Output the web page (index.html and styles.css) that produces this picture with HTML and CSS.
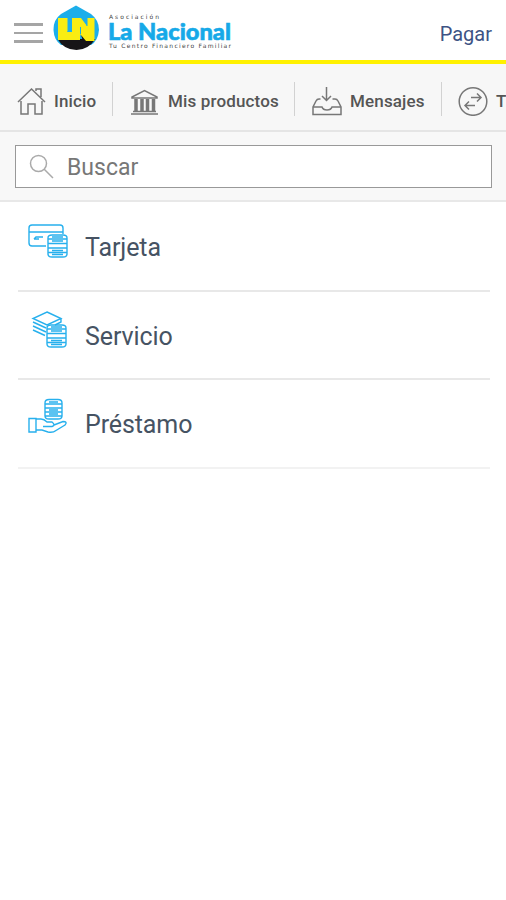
FILE: index.html
```html
<!DOCTYPE html>
<html lang="es">
<head>
<meta charset="utf-8">
<title>Pagar</title>
<link rel="stylesheet" href="styles.css">
</head>
<body>
<header class="header">
  <button class="burger" aria-label="Menú"><span></span><span></span><span></span></button>
  <svg class="logo" width="184" height="54" viewBox="50 0 184 54">
    <path fill="#1caeea" d="M76 5.500L91 14Q99 20 99 30Q98 41 91 45H61Q54 40 53.500 30Q53 20 61 14Z"/>
    <path fill="#171417" d="M57.500 39H95.500Q88 50 76.500 50Q64 50 57.500 39Z"/>
    <path fill="#f9ed12" d="M58 18H67.500V32H72V18H81L87 26V18H94.500V41H85L80 34V40H58Z"/>
    <path fill="#171417" d="M81 35L86 41H83Z"/>
    <path stroke="#1caeea" stroke-width="1" d="M67.500 31.500H72M80.500 27V34M87 18V26"/>
    <text class="logo-small" x="109" y="19" textLength="50">Asociación</text>
    <text class="logo-name" x="108" y="40" textLength="123" lengthAdjust="spacingAndGlyphs">La Nacional</text>
    <text class="logo-small" x="109" y="47.500" textLength="122">Tu Centro Financiero Familiar</text>
  </svg>
  <span class="page-title">Pagar</span>
</header>
<nav class="nav">
  <a class="tab tab-home">
    <svg width="30" height="30" viewBox="0 0 30 30"><path d="M1 16L14.500 3L28 16M4 15V28H11V18H18V28H25V15M19 5V3H24V11"/></svg>
    <span>Inicio</span>
  </a>
  <a class="tab tab-products">
    <svg width="30" height="30" viewBox="0 0 30 30"><path d="M2 12V11L14.500 4.500L27 11V12ZM3 25.500H26M1 28H28"/><path class="columns" d="M6 13V25M12 13V25M17.500 13V25M23.500 13V25"/></svg>
    <span>Mis productos</span>
  </a>
  <a class="tab tab-messages">
    <svg width="30" height="30" viewBox="0 0 30 30"><path d="M14.500 1V14M10 10L14.500 14.500L19 10M8.500 13H7Q5 13 4 15L1 21V28.500H29V21L26 15Q25 13 23 13H20.500M1 21H10Q11 24 15 24Q19 24 20 21H29"/></svg>
    <span>Mensajes</span>
  </a>
  <a class="tab tab-transfers">
    <svg width="30" height="30" viewBox="0 0 30 30"><circle cx="15" cy="15.500" r="13.800"/><path d="M13 11.500H23M19 7.500L23 11.500L19 15.500M17 19.500H7M11 15.500L7 19.500L11 23.500"/></svg>
    <span>Transferencias</span>
  </a>
</nav>
<div class="search-bar">
  <label class="search-field">
    <svg width="26" height="26" viewBox="0 0 26 26"><circle cx="9.500" cy="9.500" r="8"/><path d="M15 15L24 24"/></svg>
    <span>Buscar</span>
  </label>
</div>
<main class="list">
  <a class="row row-card">
    <svg width="42" height="40" viewBox="0 0 42 40"><path d="M19 26H5Q2 26 2 23V8Q2 5 5 5H33Q36 5 36 8V14M2 12H36M7 19L9 17H16M7 19H12"/><path d="M21 18Q21 15 25 15H36Q40 15 40 18V34Q40 37 36 37H25Q21 37 21 34ZM21 19H40M21 23.500H40M21 28H40M21 32.500H40M25 17H36M25 21H36M25 30.500H36M25 34.500H36"/></svg>
    <span>Tarjeta</span>
  </a>
  <a class="row row-service">
    <svg width="42" height="40" viewBox="0 0 42 40"><path d="M20 2L34 8.500L20 15L6 8.500ZM6 12L19 18M6 16L19 22M6 20L18 25.500M34 8.500V12L28 15"/><path d="M20 18Q20 15 24 15H35Q39 15 39 18V34Q39 37 35 37H24Q20 37 20 34ZM20 19H39M20 23.500H39M20 28H39M20 32.500H39M24 17H35M24 21H35M24 30.500H35M24 34.500H35"/></svg>
    <span>Servicio</span>
  </a>
  <a class="row row-loan">
    <svg width="42" height="40" viewBox="0 0 42 40"><path d="M18 5Q18 1.500 22 1.500H31Q35 1.500 35 5V18Q35 21 31 21H22Q18 21 18 18ZM18 6H35M18 10H35M18 14H35M18 18H35M22 4H31M22 12H31M22 16H31"/><path d="M2 20.500H9V34H2ZM9 21H14Q17 21 20 24H25Q29 27 25 28.500H16M27 27L36 23.500Q41 23.500 38 27L29 32.500Q26 35 21 34L15 32H9"/></svg>
    <span>Préstamo</span>
  </a>
</main>
</body>
</html>
```
FILE: styles.css
```css
* { box-sizing: border-box; }
body { margin: 0; background: #fff; font-family: Roboto, "Noto Sans", sans-serif; overflow: hidden; }
svg { display: block; flex: none; fill: none; }
.header { display: flex; height: 64px; border-bottom: 4px solid #fff100; padding-left: 14px; }
.burger { display: flex; flex-direction: column; gap: 6px; width: 29px; margin: 23px 7px 0 0; padding: 0; border: 0; background: none; }
.burger span { width: 29px; height: 2.500px; background: #a5a5a5; }
.logo-small { font: 400 6px "DejaVu Sans", sans-serif; fill: #444; }
.logo-name { font: 900 23px Lato, sans-serif; fill: #16a9e8; stroke: #16a9e8; stroke-width: .6px; }
.page-title { margin: 22px 14px 0 auto; color: #3d5384; font-size: 20px; line-height: 24px; letter-spacing: 0; }
.nav { display: flex; height: 68px; background: #f7f7f7; border-bottom: 2px solid #e5e5e5; padding-top: 18px; overflow: hidden; }
.tab { display: flex; flex: none; height: 34px; color: #555; font-size: 17px; font-weight: 500; line-height: 38px; letter-spacing: .15px; border-right: 1.500px solid #d2d2d2; }
.tab svg { margin-top: 4px; stroke: #777; stroke-width: 1.500px; }
.tab span { margin-left: 7px; white-space: nowrap; }
.tab .columns { stroke-width: 3.500px; }
.tab-home { width: 113px; padding-left: 17px; }
.tab-products { width: 182px; padding-left: 17px; }
.tab-products span { margin-left: 8px; }
.tab-messages { width: 147px; padding-left: 17px; }
.tab-messages span { margin-left: 8px; }
.tab-transfers { padding-left: 16px; border: 0; }
.tab-transfers span { margin-left: 8px; }
.search-bar { height: 70px; padding: 13px 14px 0 15px; background: #f8f8f8; border-bottom: 2px solid #e8e8e8; }
.search-field { display: flex; height: 43px; border: 1.500px solid #999; background: #fff; padding-left: 13px; color: #777; font-size: 23px; line-height: 43px; }
.search-field svg { margin-top: 8px; stroke: #aaa; stroke-width: 1.500px; }
.search-field span { margin-left: 12px; }
.list { padding: 0 16px 0 18px; }
.row { display: flex; height: 88px; border-bottom: 2px solid #e8e8e8; color: #465363; font-size: 25px; line-height: 30px; letter-spacing: -.1px; }
.row-card { height: 90px; }
.row svg { margin: 18px 16px 0 9px; stroke: #27b0ed; stroke-width: 1.400px; }
.row span { margin-top: 30px; }
.row-card span { margin-top: 31px; }
.row-loan { height: 89px; border-bottom-color: #f2f2f2; }
```
